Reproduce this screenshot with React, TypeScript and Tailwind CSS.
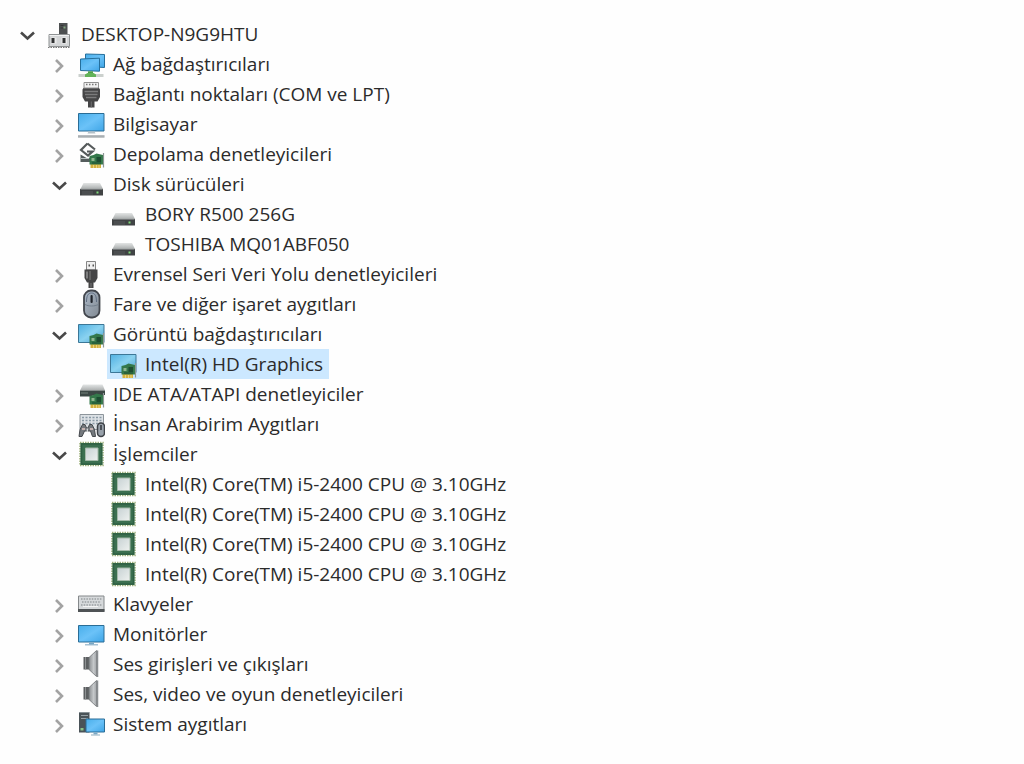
import { useState, type ReactNode } from "react";

type IconName =
  | "root" | "network" | "port" | "computer" | "storage" | "disk" | "usb" | "mouse"
  | "display" | "ide" | "hid" | "cpu" | "keyboard" | "monitor" | "speaker" | "system";

interface Device {
  id: string;
  label: string;
  icon: IconName;
  children?: Device[];
  expanded?: boolean;
}

const cpuLabel = "Intel(R) Core(TM) i5-2400 CPU @ 3.10GHz";

const tree: Device = {
  id: "root", label: "DESKTOP-N9G9HTU", icon: "root", expanded: true,
  children: [
    { id: "net", label: "Ağ bağdaştırıcıları", icon: "network", children: [] },
    { id: "ports", label: "Bağlantı noktaları (COM ve LPT)", icon: "port", children: [] },
    { id: "pc", label: "Bilgisayar", icon: "computer", children: [] },
    { id: "storage", label: "Depolama denetleyicileri", icon: "storage", children: [] },
    {
      id: "disks", label: "Disk sürücüleri", icon: "disk", expanded: true,
      children: [
        { id: "disk1", label: "BORY R500 256G", icon: "disk" },
        { id: "disk2", label: "TOSHIBA MQ01ABF050", icon: "disk" },
      ],
    },
    { id: "usb", label: "Evrensel Seri Veri Yolu denetleyicileri", icon: "usb", children: [] },
    { id: "mouse", label: "Fare ve diğer işaret aygıtları", icon: "mouse", children: [] },
    {
      id: "display", label: "Görüntü bağdaştırıcıları", icon: "display", expanded: true,
      children: [{ id: "gpu", label: "Intel(R) HD Graphics", icon: "display" }],
    },
    { id: "ide", label: "IDE ATA/ATAPI denetleyiciler", icon: "ide", children: [] },
    { id: "hid", label: "İnsan Arabirim Aygıtları", icon: "hid", children: [] },
    {
      id: "cpus", label: "İşlemciler", icon: "cpu", expanded: true,
      children: [
        { id: "cpu1", label: cpuLabel, icon: "cpu" },
        { id: "cpu2", label: cpuLabel, icon: "cpu" },
        { id: "cpu3", label: cpuLabel, icon: "cpu" },
        { id: "cpu4", label: cpuLabel, icon: "cpu" },
      ],
    },
    { id: "kbd", label: "Klavyeler", icon: "keyboard", children: [] },
    { id: "mon", label: "Monitörler", icon: "monitor", children: [] },
    { id: "audio", label: "Ses girişleri ve çıkışları", icon: "speaker", children: [] },
    { id: "sound", label: "Ses, video ve oyun denetleyicileri", icon: "speaker", children: [] },
    { id: "sys", label: "Sistem aygıtları", icon: "system", children: [] },
  ],
};

function Board() {
  return (
    <>
      <path d="M13.500 25h10.500v4H13.500z" fill="#d3b13f" />
      <path d="M16.500 26v3M19.500 26v3M22 26v3" stroke="#f1dc8c" strokeWidth="0.800" />
      <path d="M12.500 17l4-1 3-1.500 6.500 1.500v9.500H12.500z" fill="#34784a" />
      <path d="M14.500 19h3v3h-3z" fill="#8fb58e" />
      <path d="M19.500 18h4.500v5h-4.500z" fill="#1d4d32" />
      <path d="M15 24h9" stroke="#1c4d31" />
      <path d="M26.500 14v14.500" stroke="#8d9894" strokeWidth="1.200" />
    </>
  );
}

const drawings: Record<IconName, ReactNode> = {
  root: (
    <>
      <path d="M14 4h8.500v12H14z" fill="#4c4f50" />
      <path d="M15.500 6.500h3M15.500 9h3" stroke="#343636" />
      <path d="M18.500 7.500h2v2h-2z" fill="#83a77e" />
      <path d="M4 15.500h20.500v12H4z" fill="#d3d5d6" stroke="#8f9293" />
      <path d="M4.500 16.500h19.500" stroke="#f1f2f2" />
      <path d="M6 18.500h5.500v6H6zM16.500 18.500h5.500v6h-5.500z" fill="#ececec" />
      <path d="M6.500 19h3v5h-3zM17.500 19h3v5h-3z" fill="#303233" />
      <path d="M3 28.500h22.500" stroke="#777" strokeDasharray="1.500 1" />
    </>
  ),
  network: (
    <>
      <path d="M8.500 5l19 0.500v13l-19-1z" fill="url(#dmScreen)" stroke="#256f9c" />
      <path d="M3.500 10l19-0.800v13L3.500 21.500z" fill="url(#dmScreen)" stroke="#256f9c" />
      <path d="M11 22.300h5v2.200h-5z" fill="#4fa04a" />
      <path d="M1.500 26.500h25" stroke="#cbd0cd" strokeWidth="3" />
      <path d="M8 25.500l2.500-1.500h6l2.500 1.500v2.500H8z" fill="#63b359" />
    </>
  ),
  port: (
    <>
      <path d="M5.500 10.500l1-1.500h15.500l1 1.500v7.500l-2.500 4.500h-3v6h-6.500v-6h-3l-2.500-4.500z" fill="#454546" />
      <path d="M7.500 12.500h13.500M8 15.500h12.500M9 18.500h10.500" stroke="#7b7b7c" strokeWidth="1.300" />
      <path d="M14.300 22.500v6" stroke="#6e6e6f" />
      <path d="M7 3.500h14.500V9H7z" fill="#f2f2f2" stroke="#929292" />
      <path d="M9 5.500h11" stroke="#777" strokeWidth="1.500" strokeDasharray="1.500 1.500" />
    </>
  ),
  computer: (
    <>
      <path d="M1.500 4.500h25.500v17.500h-25.500z" fill="url(#dmScreen)" stroke="#2a6d96" />
      <path d="M11.500 22.500h6l1 2h-8z" fill="#b6c1c8" />
      <path d="M1 27.800h26.500" stroke="#b3b8bb" strokeWidth="2" />
      <path d="M1 26.800h26.500" stroke="#8d9498" strokeWidth="0.800" />
    </>
  ),
  storage: (
    <>
      <path d="M10.500 4.500L18 10.500M10.500 4.500L4 11l7 5.500 4.500-4H10" fill="none" stroke="#555a5b" strokeWidth="2.200" />
      <path d="M3.500 15.500l7 4 3-1v4.500h-10z" fill="#555d5d" />
      <path d="M4 19.500h8" stroke="#b8bfc0" />
      <Board />
    </>
  ),
  disk: (
    <>
      <path d="M6.500 14h16.500l3 6H3.500z" fill="url(#dmMetal)" />
      <path d="M3 20h23v6.500H3z" fill="#404344" />
      <path d="M3.500 20h22" stroke="#a4a8a9" />
      <path d="M5 23h11M5 25h11" stroke="#5d6162" strokeWidth="0.800" />
      <path d="M19.500 22.500h2v2h-2z" fill="#7fda79" />
    </>
  ),
  usb: (
    <>
      <path d="M9.500 2.500h9V11h-9z" fill="#efefef" stroke="#858585" />
      <path d="M11.500 5.500h1.500v2h-1.500zM15.500 5.500h1.500v2h-1.500z" fill="#555" />
      <path d="M7.500 10.500h13v8.500l-2.500 4.500h-1.500v5.500h-5v-5.500H10L7.500 19z" fill="#454546" />
      <path d="M10 12.500v7" stroke="#929293" strokeWidth="1.500" />
      <path d="M13 12v9" stroke="#6c6c6d" strokeWidth="1.500" />
      <path d="M14 24v4.500" stroke="#787879" />
    </>
  ),
  mouse: (
    <>
      <rect x="7" y="1.500" width="15.500" height="27" rx="7" fill="url(#dmMouse)" stroke="#42464d" strokeWidth="1.800" />
      <path d="M9.500 13c0-6 1.500-9 5-9s5 3 5 9" fill="none" stroke="#606e82" />
      <rect x="13.500" y="6" width="2.200" height="8" rx="1" fill="#20252c" />
      <path d="M8 15.500c4 2 9 2 13.500 0" stroke="#717d8a" fill="none" />
    </>
  ),
  display: (
    <>
      <path d="M1.500 5.500h25.500v18h-25.500z" fill="url(#dmDisplay)" stroke="#3c7797" />
      <Board />
    </>
  ),
  ide: (
    <>
      <path d="M6 5.500h19.500l2.500 6H3z" fill="url(#dmMetal)" />
      <path d="M3 11.500h25V16h-11l-3 1.500H3z" fill="#3c4845" />
      <path d="M4 14h7" stroke="#73807b" />
      <Board />
    </>
  ),
  hid: (
    <>
      <path d="M3 5.500h23.500v15H3z" fill="#dce1e5" stroke="#8d959b" />
      <path d="M5 8.500h20M5 11.500h20M5 14.500h20" stroke="#8a9aa6" strokeWidth="1.500" strokeDasharray="2 1.500" />
      <path
        d="M2 27.500l1-7 2.500-5h2.500l1.500 3.500h1.500l1.500-3.500h2.500l2.500 5 1 7h-3l-2-5.500h-6L5 27.500z"
        fill="#74797e" stroke="#45494d"
      />
      <path d="M10.300 19.500v3.500" stroke="#dfe2e4" strokeWidth="1.200" />
      <path d="M5 20h3M13 20h3" stroke="#e0c5c2" strokeWidth="1.500" />
      <rect x="20.500" y="14" width="7" height="13.500" rx="3.500" fill="#98a1aa" stroke="#3e4247" strokeWidth="1.500" />
      <path d="M24 16v5" stroke="#30343a" strokeWidth="1.500" />
    </>
  ),
  cpu: (
    <>
      <rect x="3" y="3.500" width="23" height="23" fill="none" stroke="#9db079" strokeWidth="1.500" strokeDasharray="1.500 1" />
      <path d="M3.500 4h22v22h-22z" fill="#3c7050" />
      <path d="M4.500 5h20v20h-20z" fill="none" stroke="#2f6043" strokeWidth="1.500" />
      <path d="M8.500 9h12.500v12.500H8.500z" fill="url(#dmDie)" stroke="#a4baa9" />
    </>
  ),
  keyboard: (
    <>
      <path d="M1.500 7h25.500v15.500h-25.500z" fill="#d6d9db" stroke="#85898b" />
      <path d="M4 10h21M5 13h19M4 16h21" stroke="#9a9fa2" strokeWidth="1.500" strokeDasharray="1.500 1.200" />
      <path d="M6 17.500h15" stroke="#f4f4f4" />
      <path d="M1 20h26.500v3H1z" fill="#4f5355" />
    </>
  ),
  monitor: (
    <>
      <path d="M1.500 6.500h25.500V23h-25.500z" fill="url(#dmScreen)" stroke="#2a6d96" />
      <path d="M12 23.500h5v2h-5z" fill="#79a8c6" />
      <path d="M8 25.800h13" stroke="#91b3ca" strokeWidth="1.200" />
    </>
  ),
  speaker: (
    <>
      <path d="M6.500 8h6v12.500h-6z" fill="#5c5f61" />
      <path d="M8.500 8v12.500" stroke="#8f9294" />
      <path d="M12 8.500L19.500 1.500v26L12 20.500z" fill="url(#dmCone)" stroke="#707376" strokeWidth="0.800" />
      <path d="M20.500 1.500v26.500" stroke="#898d90" strokeWidth="1.500" />
    </>
  ),
  system: (
    <>
      <path d="M2 3.500h10.500v20H2z" fill="#4a5358" />
      <path d="M4 6.500h7M4 9.500h7" stroke="#959fa4" strokeWidth="1.200" />
      <path d="M3.500 19h3v2.500h-3z" fill="#8bc489" />
      <path d="M2 3.500h10.500" stroke="#879095" />
      <path d="M9 10h18.500v13H9z" fill="url(#dmScreen)" stroke="#2a6d96" />
      <path d="M16.500 23.500h4v2h-4z" fill="#79a8c6" />
      <path d="M14 26h9" stroke="#9fb9c9" strokeWidth="1.200" />
    </>
  ),
};

function Gradients() {
  return (
    <svg className="absolute size-0" aria-hidden="true">
      <defs>
        <linearGradient id="dmScreen" x1="0" y1="0" x2="1" y2="1">
          <stop offset="0" stopColor="#48aeea" />
          <stop offset="0.500" stopColor="#6bc2f8" />
          <stop offset="1" stopColor="#3fa5e6" />
        </linearGradient>
        <linearGradient id="dmDisplay" x1="0" y1="0" x2="1" y2="1">
          <stop offset="0" stopColor="#4fb0e2" />
          <stop offset="0.500" stopColor="#8ad2f0" />
          <stop offset="1" stopColor="#4ba4cf" />
        </linearGradient>
        <linearGradient id="dmMetal" x1="0" y1="0" x2="0" y2="1">
          <stop offset="0" stopColor="#e3e5e5" />
          <stop offset="1" stopColor="#a9adad" />
        </linearGradient>
        <linearGradient id="dmMouse" x1="0" y1="0" x2="1" y2="1">
          <stop offset="0" stopColor="#adbac9" />
          <stop offset="1" stopColor="#808891" />
        </linearGradient>
        <linearGradient id="dmDie" x1="0" y1="0" x2="1" y2="1">
          <stop offset="0" stopColor="#c8d2d4" />
          <stop offset="1" stopColor="#eef1ef" />
        </linearGradient>
        <linearGradient id="dmCone" x1="0" y1="0" x2="1" y2="0">
          <stop offset="0" stopColor="#8b8e91" />
          <stop offset="0.600" stopColor="#c5c8ca" />
          <stop offset="1" stopColor="#a4a7aa" />
        </linearGradient>
      </defs>
    </svg>
  );
}

function Chevron({ open }: { open: boolean }) {
  return (
    <svg viewBox="0 0 28 30" className="h-[30px] w-7" fill="none" strokeWidth="2.600" aria-hidden="true">
      {open ? (
        <path d="M8 13.500l6.500 6 6.500-6" stroke="#484848" />
      ) : (
        <path d="M11 11l6 6-6 6" stroke="#a3a3a3" />
      )}
    </svg>
  );
}

interface NodeProps {
  device: Device;
  selected: string;
  onSelect: (id: string) => void;
}

function TreeNode({ device, selected, onSelect }: NodeProps) {
  const [open, setOpen] = useState(Boolean(device.expanded));
  const isSelected = selected === device.id;
  return (
    <li>
      <div className="flex h-[30px] items-center gap-0.5">
        {device.children ? (
          <button
            type="button"
            className="w-7 shrink-0"
            aria-label={device.label}
            aria-expanded={open}
            onClick={() => setOpen(!open)}
          >
            <Chevron open={open} />
          </button>
        ) : (
          <span className="w-7 shrink-0" />
        )}
        <button
          type="button"
          aria-pressed={isSelected}
          onClick={() => onSelect(device.id)}
          className={`flex h-full items-center gap-2 pr-1.5 pl-0.5 whitespace-nowrap ${isSelected ? "bg-[#cce8ff]" : ""}`}
        >
          <svg viewBox="0 0 28 30" className="h-[30px] w-7 shrink-0" aria-hidden="true">
            {drawings[device.icon]}
          </svg>
          <span>{device.label}</span>
        </button>
      </div>
      {open && device.children && device.children.length > 0 && (
        <ul className="pl-8">
          {device.children.map((child) => (
            <TreeNode key={child.id} device={child} selected={selected} onSelect={onSelect} />
          ))}
        </ul>
      )}
    </li>
  );
}

export default function App() {
  const [selected, setSelected] = useState("gpu");
  return (
    <main className="min-h-screen bg-[#fefefe] pt-[19px] pb-6 pl-[13px] font-['Open_Sans','Noto_Sans',sans-serif] text-[19px] leading-[30px] text-[#2b2b2b]">
      <Gradients />
      <ul>
        <TreeNode device={tree} selected={selected} onSelect={setSelected} />
      </ul>
    </main>
  );
}
